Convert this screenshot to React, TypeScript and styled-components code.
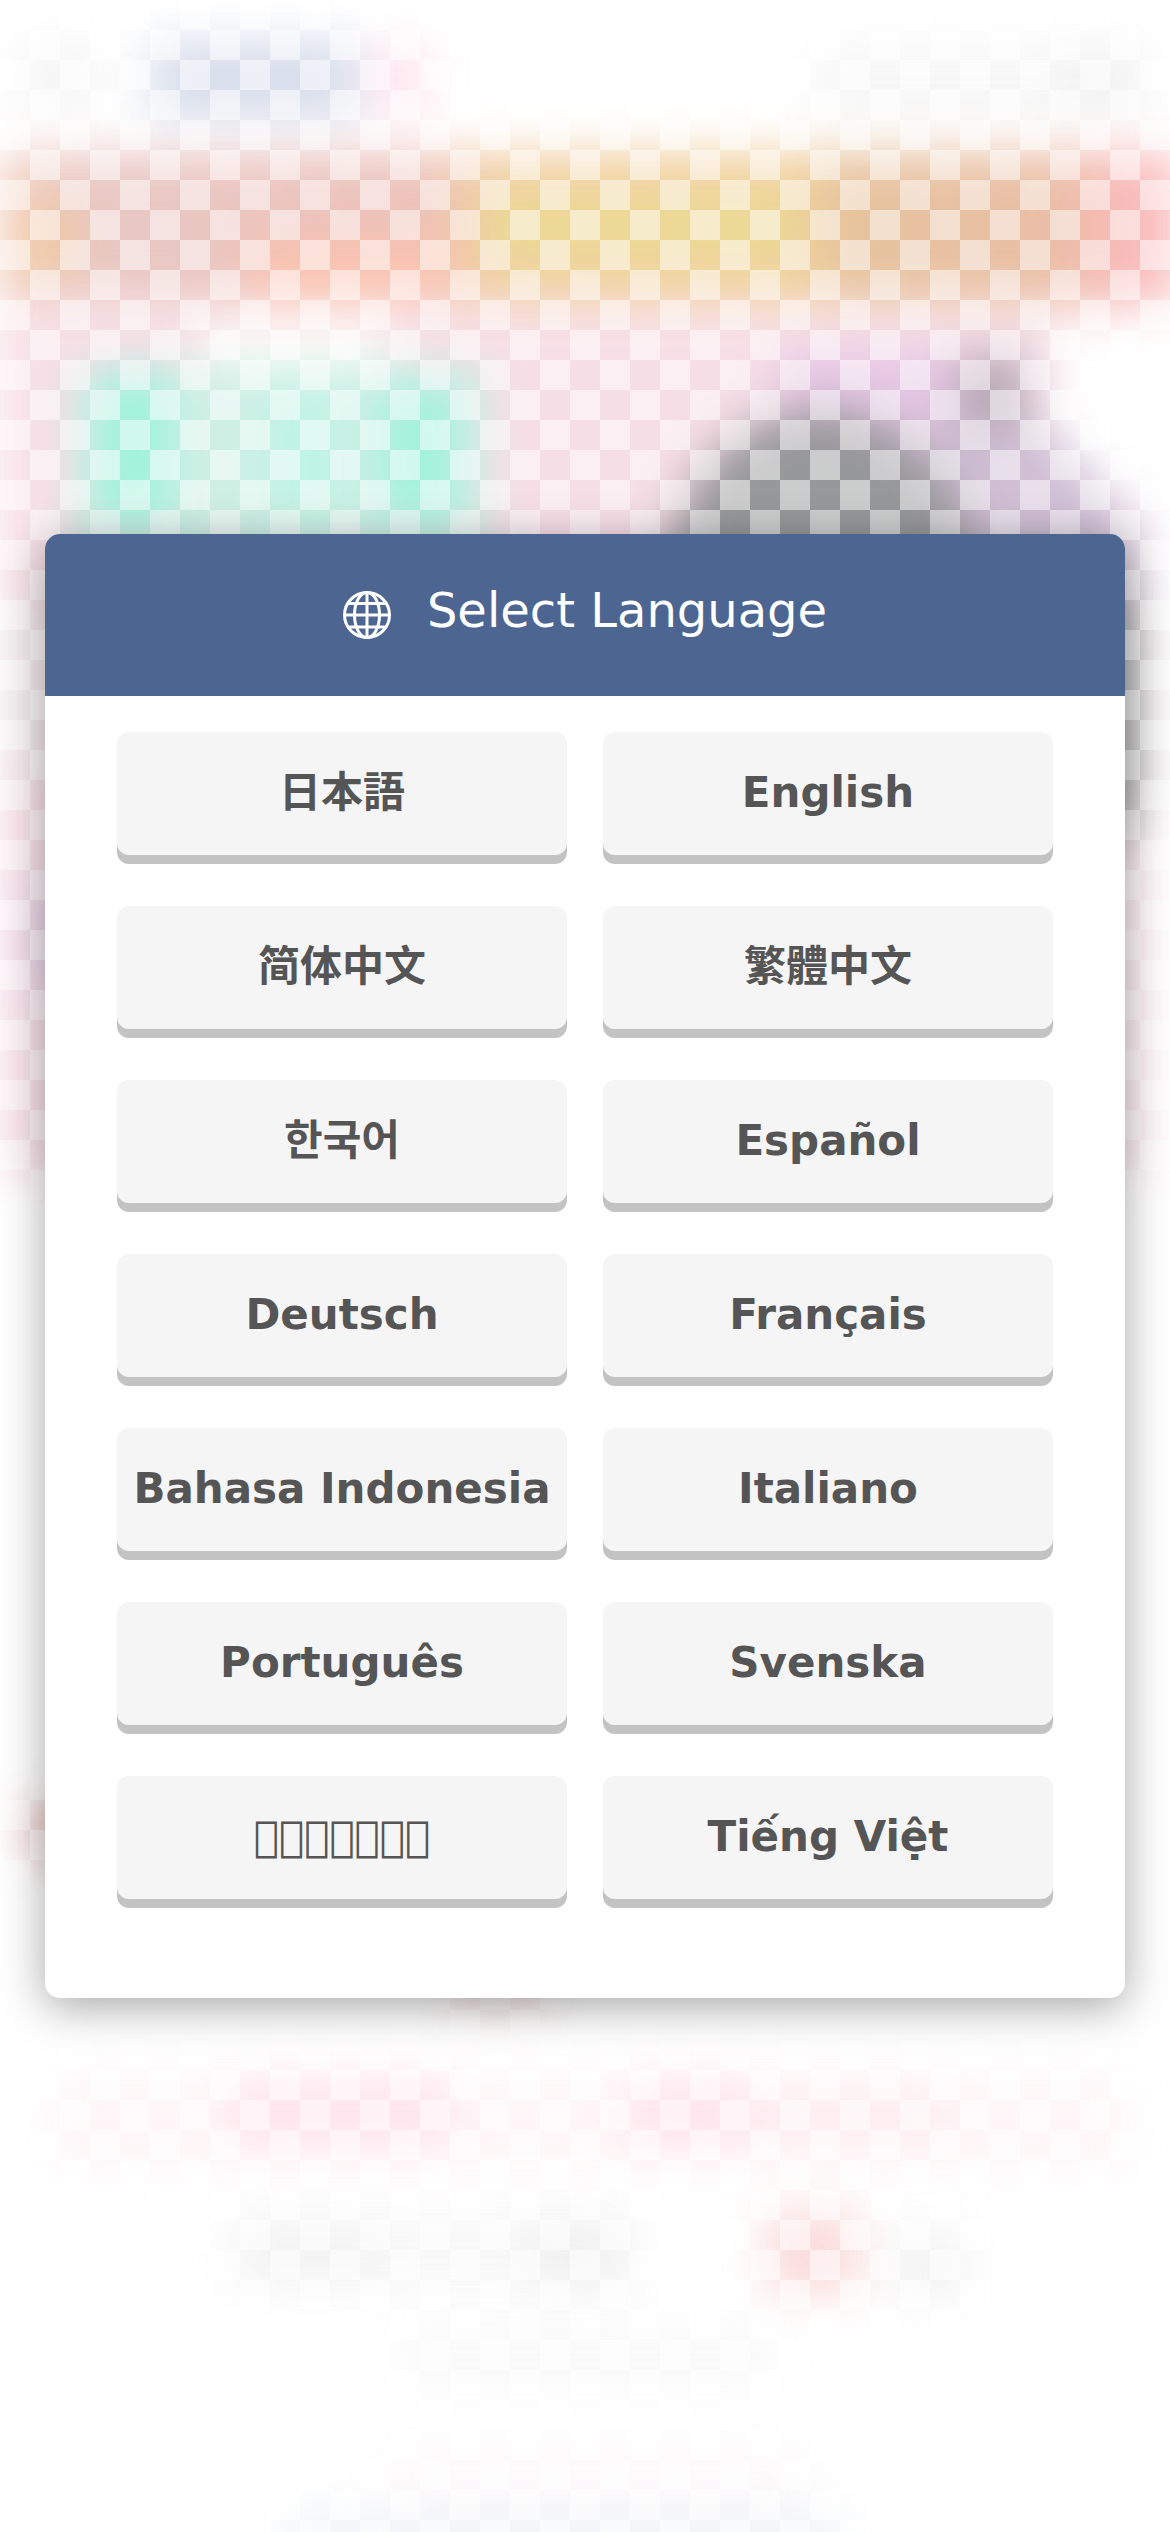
import React from "react";
import styled, { createGlobalStyle } from "styled-components";

const GlobalStyle = createGlobalStyle`
  *, *::before, *::after {
    box-sizing: border-box;
  }

  body {
    margin: 0;
    background: #ffffff;
    font-family: "DejaVu Sans", "Noto Sans CJK JP", sans-serif;
  }
`;

const Page = styled.main`
  position: relative;
  isolation: isolate;
  overflow: hidden;
  display: flex;
  flex-direction: column;
  justify-content: center;
  min-height: 100vh;
  padding: 45px;
`;

const Backdrop = styled.div`
  position: absolute;
  inset: 0;
  z-index: -1;

  &::after {
    content: "";
    position: absolute;
    inset: 0;
    background: repeating-conic-gradient(
        transparent 0 25%,
        rgba(255, 255, 255, 0.5) 0 50%
      )
      0 0 / 60px 60px;
  }
`;

const Artwork = styled.svg`
  display: block;
  width: 100%;
  height: 100%;
`;

const Dialog = styled.section`
  border-radius: 15px;
  background: #ffffff;
  box-shadow: 0 9px 45px rgba(0, 0, 0, 0.35);
`;

const DialogHeader = styled.header`
  display: flex;
  align-items: center;
  justify-content: center;
  gap: 36px;
  height: 162px;
  padding-bottom: 10px;
  border-radius: 15px 15px 0 0;
  background: #4c6591;
  color: #ffffff;
`;

const GlobeIcon = styled.svg`
  width: 48px;
  height: 48px;
  margin-top: 10px;
  fill: none;
  stroke: currentColor;
  stroke-width: 3;
`;

const Title = styled.h1`
  margin: 0;
  font-size: 48px;
  font-weight: 400;
  line-height: 60px;
`;

const LanguageGrid = styled.div`
  display: grid;
  grid-template-columns: repeat(2, minmax(0, 1fr));
  gap: 51px 36px;
  padding: 36px 72px 99px;
`;

const LanguageButton = styled.button`
  height: 123px;
  padding: 0 0 1px;
  border: 0;
  border-radius: 12px;
  background: #f5f5f5;
  box-shadow: 0 9px 0 #c3c3c3;
  color: #555555;
  font-family: "DejaVu Sans", "Noto Sans CJK JP", sans-serif;
  font-size: 42px;
  font-weight: 700;
  line-height: 60px;
  white-space: nowrap;
  cursor: pointer;

  &:lang(zh-Hans) {
    font-family: "DejaVu Sans", "Noto Sans CJK SC", sans-serif;
  }

  &:lang(zh-Hant) {
    font-family: "DejaVu Sans", "Noto Sans CJK TC", sans-serif;
  }

  &:lang(ko) {
    font-family: "DejaVu Sans", "Noto Sans CJK KR", sans-serif;
  }
`;

const languages = [
  { code: "ja", name: "日本語" },
  { code: "en", name: "English" },
  { code: "zh-Hans", name: "简体中文" },
  { code: "zh-Hant", name: "繁體中文" },
  { code: "ko", name: "한국어" },
  { code: "es", name: "Español" },
  { code: "de", name: "Deutsch" },
  { code: "fr", name: "Français" },
  { code: "id", name: "Bahasa Indonesia" },
  { code: "it", name: "Italiano" },
  { code: "pt", name: "Português" },
  { code: "sv", name: "Svenska" },
  { code: "th", name: "\u{F0000}".repeat(7), label: "ภาษาไทย" },
  { code: "vi", name: "Tiếng Việt" },
];

function BackdropArtwork() {
  return (
    <Artwork viewBox="0 0 1170 2532" preserveAspectRatio="xMidYMin slice" aria-hidden="true">
      <defs>
        <filter
          id="soft"
          filterUnits="userSpaceOnUse"
          x="-100"
          y="-100"
          width="1370"
          height="2732"
          colorInterpolationFilters="sRGB"
        >
          <feGaussianBlur stdDeviation="23" />
        </filter>
        <linearGradient id="banner" gradientUnits="userSpaceOnUse" x1="0" y1="0" x2="1170" y2="0">
          <stop offset="0" stopColor="#f1c8b6" />
          <stop offset="0.08" stopColor="#e6c2be" />
          <stop offset="0.36" stopColor="#ebbcb4" />
          <stop offset="0.42" stopColor="#efc798" />
          <stop offset="0.68" stopColor="#efcb93" />
          <stop offset="0.72" stopColor="#e4bd93" />
          <stop offset="0.91" stopColor="#e8b89d" />
          <stop offset="0.95" stopColor="#f8b2b0" />
          <stop offset="1" stopColor="#f8b8b8" />
        </linearGradient>
      </defs>
      <g filter="url(#soft)" opacity="0.9">
        <rect x="0" y="310" width="1140" height="865" fill="#f6dbe4" />
        <rect x="1050" y="320" width="140" height="180" fill="#ffffff" />
        <rect x="200" y="320" width="190" height="55" fill="#fdfbfa" />
        <rect x="150" y="40" width="210" height="80" fill="#d3dae9" />
        <rect x="370" y="45" width="60" height="70" fill="#ffe2ec" />
        <rect x="20" y="40" width="80" height="75" fill="#f5f5f5" />
        <rect x="815" y="45" width="330" height="75" fill="#f6f6f6" />
        <rect x="1065" y="50" width="70" height="65" fill="#f0f0f0" />
        <rect x="0" y="153" width="1180" height="150" fill="url(#banner)" />
        <rect x="480" y="190" width="320" height="75" fill="#ecd68b" />
        <rect x="250" y="238" width="200" height="60" fill="#fabca6" />
        <rect x="25" y="205" width="50" height="70" fill="#efc597" />
        <rect x="75" y="365" width="410" height="210" fill="#cbeee3" />
        <rect x="95" y="375" width="75" height="145" fill="#95f2d6" />
        <rect x="265" y="390" width="75" height="130" fill="#b8f3e2" />
        <rect x="380" y="385" width="80" height="135" fill="#99f1d8" />
        <rect x="780" y="350" width="180" height="100" fill="#e3c1e2" />
        <rect x="955" y="355" width="75" height="95" fill="#afa0ae" />
        <path d="M920 430h130l90 100v60H920z" fill="#cbb8d0" />
        <ellipse cx="820" cy="575" rx="152" ry="165" fill="#8c8d8f" />
        <path d="M1010 555q110 10 125 60v190q-20 60-125 60z" fill="#8c8c8e" />
        <rect x="0" y="600" width="60" height="180" fill="#efe6e9" />
        <rect x="30" y="890" width="50" height="100" fill="#e0cbe4" />
        <rect x="30" y="1805" width="60" height="50" fill="#e0a9a9" />
        <rect x="455" y="1960" width="90" height="46" fill="#f0d6d4" />
        <rect x="50" y="2075" width="1080" height="95" fill="#fef5f7" />
        <rect x="230" y="2080" width="220" height="62" fill="#ffdfea" />
        <rect x="630" y="2080" width="130" height="62" fill="#ffdfea" />
        <rect x="740" y="2090" width="210" height="50" fill="#fdeaef" />
        <rect x="230" y="2215" width="400" height="75" fill="#f7f7f7" />
        <rect x="240" y="2220" width="140" height="65" fill="#f2f2f2" />
        <rect x="530" y="2220" width="100" height="70" fill="#efefef" />
        <rect x="765" y="2210" width="95" height="85" fill="#f9d8d7" />
        <rect x="885" y="2230" width="85" height="70" fill="#f3f3f3" />
        <rect x="400" y="2325" width="375" height="65" fill="#f9f9f9" />
        <rect x="380" y="2445" width="430" height="55" fill="#fdf9fa" />
        <rect x="285" y="2510" width="560" height="60" fill="#eff2f7" />
      </g>
    </Artwork>
  );
}

function Globe() {
  return (
    <GlobeIcon viewBox="0 0 48 48" aria-hidden="true">
      <circle cx="24" cy="24" r="22.5" />
      <ellipse cx="24" cy="24" rx="12.5" ry="22.5" />
      <path d="M24 1.5v45M1.5 24h45M5 12.5h38M5 36h38" />
    </GlobeIcon>
  );
}

export default function App() {
  return (
    <Page>
      <GlobalStyle />
      <Backdrop>
        <BackdropArtwork />
      </Backdrop>
      <Dialog role="dialog" aria-labelledby="language-title">
        <DialogHeader>
          <Globe />
          <Title id="language-title">Select Language</Title>
        </DialogHeader>
        <LanguageGrid>
          {languages.map(({ code, name, label }) => (
            <LanguageButton key={code} type="button" lang={code} aria-label={label}>
              {name}
            </LanguageButton>
          ))}
        </LanguageGrid>
      </Dialog>
    </Page>
  );
}
